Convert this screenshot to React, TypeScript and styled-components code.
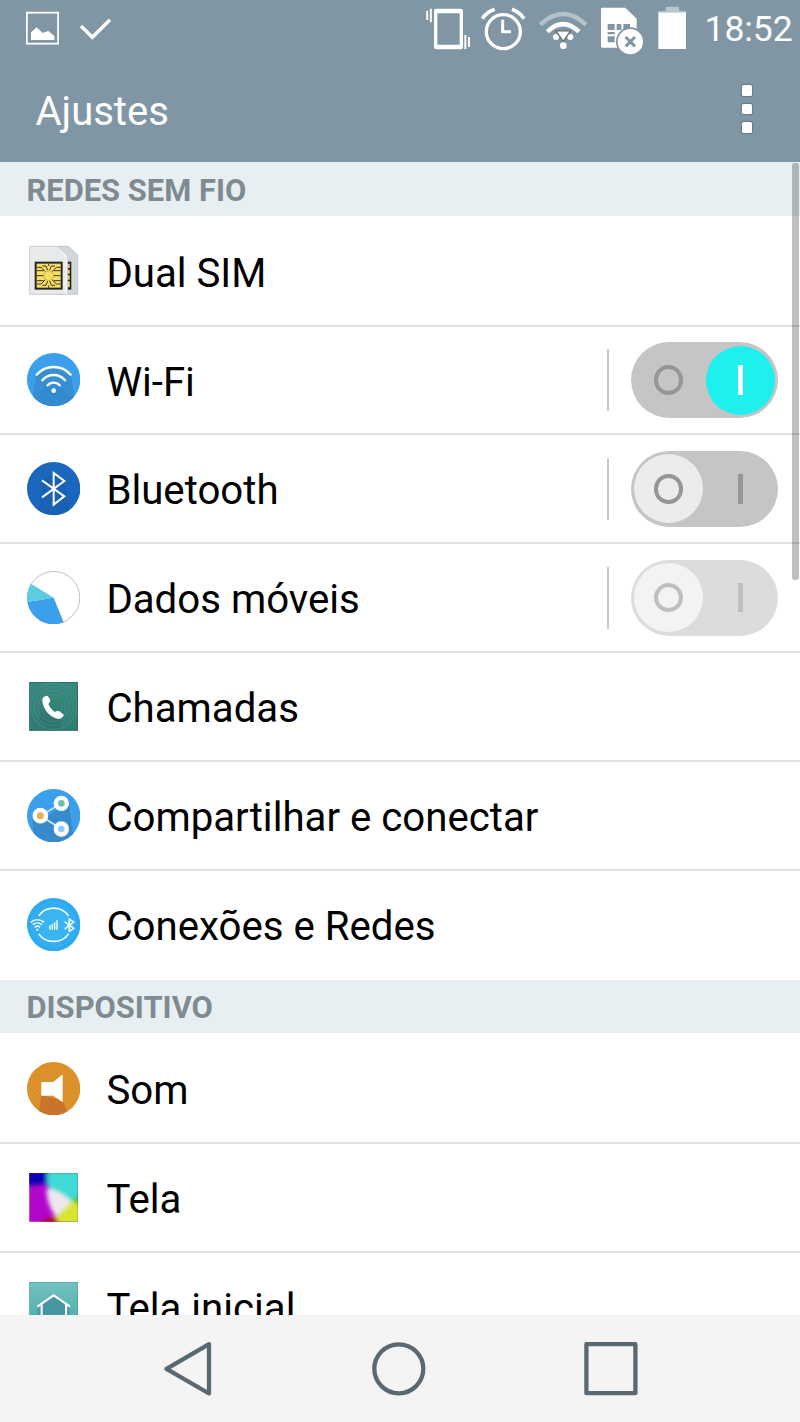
import React from "react";
import styled, { createGlobalStyle } from "styled-components";

const GlobalStyle = createGlobalStyle`
  *, *::before, *::after { box-sizing: border-box; }
  html, body { margin: 0; padding: 0; background: #fff; }
  body { font-family: Roboto, "Liberation Sans", sans-serif; overflow: hidden; }
  svg { display: block; flex: none; }
`;

const Screen = styled.div`
  width: 800px;
  height: 1422px;
  display: flex;
  flex-direction: column;
  overflow: hidden;
  background: #fff;
`;

const TopArea = styled.header`
  flex: none;
  height: 162.2px;
  background: #8096a4;
  color: #fff;
`;

const StatusBar = styled.div`
  display: flex;
  height: 60px;
  padding-left: 26px;
`;

const StatusGroup = styled.div<{ $gap: number; $end?: boolean }>`
  display: flex;
  gap: ${(p) => p.$gap}px;
  margin-left: ${(p) => (p.$end ? "auto" : "0")};
`;

const Clock = styled.time`
  width: 104px;
  padding-left: 8.5px;
  font-size: 35.6px;
  line-height: 59px;
  letter-spacing: -0.1px;
  white-space: nowrap;
`;

const TitleBar = styled.div`
  display: flex;
  align-items: center;
  justify-content: space-between;
  height: 102px;
  padding: 0 48px 4px 35.5px;
`;

const Title = styled.h1`
  margin: 0;
  padding-top: 5px;
  font-size: 40px;
  line-height: 48px;
  font-weight: 400;
`;

const MenuButton = styled.button`
  display: flex;
  flex-direction: column;
  gap: 8px;
  padding: 0;
  border: 0;
  background: none;
`;

const MenuDot = styled.span`
  width: 10.4px;
  height: 10.4px;
  border-radius: 1.5px;
  background: #fff;
  box-shadow: 0 0 1px 0.5px rgba(60, 75, 85, 0.35);
`;

const List = styled.main`
  position: relative;
  flex: 1;
  min-height: 0;
  overflow: hidden;
`;

const ScrollThumb = styled.div`
  position: absolute;
  top: 0.8px;
  right: 1px;
  width: 7px;
  height: 417px;
  border-radius: 3px;
  background: rgba(0, 0, 0, 0.25);
`;

const SectionHeader = styled.h2`
  display: flex;
  align-items: center;
  height: 53.5px;
  margin: 0;
  padding: 2.6px 0 0 26.5px;
  background: #e8eff3;
  color: #7f8b91;
  font-size: 30.9px;
  font-weight: 700;
`;

const Rows = styled.div`
  padding-top: 2px;
`;

const Row = styled.div`
  display: flex;
  align-items: center;
  height: 108.89px;
  padding: 0 22px 0 26.67px;
  border-bottom: 2px solid #dfe1e2;
  &:last-child { border-bottom-color: transparent; }
`;

const Label = styled.span`
  flex: 1;
  margin-left: 26.4px;
  padding-top: 5px;
  color: #000;
  font-size: 40.2px;
  line-height: 50px;
  white-space: nowrap;
`;

const Separator = styled.span`
  width: 2px;
  height: 62px;
  margin-right: 22.3px;
  background: #c9cacc;
`;

const Track = styled.span<{ $disabled?: boolean }>`
  display: flex;
  justify-content: space-between;
  width: 146.7px;
  height: 75.6px;
  padding: 3.3px 3.3px 3.3px 2.7px;
  border-radius: 38px;
  background: #c5c5c5;
  opacity: ${(p) => (p.$disabled ? 0.6 : 1)};
`;

const Knob = styled.span<{ $fill: string }>`
  display: flex;
  align-items: center;
  justify-content: center;
  width: 69px;
  height: 69px;
  border-radius: 50%;
  background: ${(p) => p.$fill};
`;

const Ring = styled.span`
  width: 29.3px;
  height: 29.3px;
  border: 4.4px solid #969696;
  border-radius: 50%;
`;

const Bar = styled.span<{ $color: string }>`
  width: 5px;
  height: 29.3px;
  background: ${(p) => p.$color};
`;

const NavBar = styled.nav`
  flex: none;
  display: flex;
  align-items: center;
  gap: 158px;
  height: 106.8px;
  padding-left: 160px;
  background: #f4f4f4;
`;

const NavIcon = styled.svg`
  width: 54px;
  height: 54px;
  fill: none;
  stroke: #5a6871;
  stroke-width: 4.3;
  stroke-linejoin: round;
`;

const RowIconSvg = styled.svg`
  width: 53.33px;
  height: 53.33px;
`;

type ToggleState = "on" | "off" | "disabled";

function Toggle({ state }: { state: ToggleState }) {
  const on = state === "on";
  return (
    <>
      <Separator />
      <Track $disabled={state === "disabled"}>
        <Knob $fill={on ? "transparent" : "#ececec"}><Ring /></Knob>
        <Knob $fill={on ? "#1ef0ee" : "transparent"}><Bar $color={on ? "#fff" : "#969696"} /></Knob>
      </Track>
    </>
  );
}

function Icon({ children }: { children: React.ReactNode }) {
  return <RowIconSvg viewBox="0 0 160 160" aria-hidden="true">{children}</RowIconSvg>;
}

const SimIcon = () => (
  <Icon>
    <path d="M90 7H125L152 33V151H90Z" fill="#d1d6da" stroke="#b4b8bc" strokeWidth="2" />
    <path d="M120 53H133V137H120Z" fill="#292725" />
    <path d="M121 59H128V72H121ZM121 77H128V89H121ZM121 94H128V107H121ZM121 112H128V130H121Z" fill="#f5dc5f" />
    <path d="M8 7H90L121 36V151H8Z" fill="#e8eaec" stroke="#b8bcc0" strokeWidth="2" />
    <path d="M90 7L121 36V151H115V40Z" fill="#f3f4f5" />
    <rect x="23" y="53" width="84" height="84" fill="#292725" />
    <rect x="29" y="59" width="72" height="72" fill="#f7df66" />
    <g fill="none" stroke="#3a3320" strokeWidth="3">
      <path d="M29 80H50M29 95H50M29 110H50M101 80H80M101 95H80M101 110H80" />
      <path d="M29 70H42L55 83M101 70H88L75 83M29 120H42L55 107M101 120H88L75 107" />
      <path d="M65 59V66M65 124V131M46 66H57L62 79M84 66H73L68 79M46 124H57L62 111M84 124H73L68 111" />
    </g>
    <circle cx="65" cy="95" r="14.5" fill="#f7df66" stroke="#9d8b3c" strokeWidth="1.5" />
  </Icon>
);

const WifiIcon = () => (
  <Icon>
    <clipPath id="wifiClip"><circle cx="80" cy="80" r="80" /></clipPath>
    <circle cx="80" cy="80" r="80" fill="#3b9fec" />
    <path d="M28 67Q80 22 132 67L148 160H12Z" fill="#378bcd" opacity=".8" clipPath="url(#wifiClip)" />
    <path d="M80 106L64 96L20 140L50 160H110L140 140L96 96Z" fill="#2f82c5" opacity=".3" clipPath="url(#wifiClip)" />
    <g fill="none" stroke="#fff" strokeWidth="7" strokeLinecap="round">
      <path d="M29 65A68 68 0 0 1 131 65" />
      <path d="M46 82A44 44 0 0 1 114 82" />
      <path d="M62 97A24 24 0 0 1 98 97" />
    </g>
    <circle cx="80" cy="113" r="7" fill="#fff" />
  </Icon>
);

const BluetoothIcon = () => (
  <Icon>
    <clipPath id="btClip"><circle cx="80" cy="80" r="80" /></clipPath>
    <circle cx="80" cy="80" r="80" fill="#1a67bd" />
    <path d="M46 55L80 32L112 57L130 160H32Z" fill="#195baa" opacity=".5" clipPath="url(#btClip)" />
    <path d="M45 55L112 103L80 128V33L112 57L45 106" fill="none" stroke="#fff" strokeWidth="6" />
  </Icon>
);

const DataIcon = () => (
  <Icon>
    <circle cx="80" cy="80" r="78.5" fill="#fff" stroke="#bfc0c8" strokeWidth="3" />
    <path d="M80 80L12 38A80 80 0 0 0 1 93Z" fill="#5ccde1" />
    <path d="M80 80L1 93A80 80 0 0 0 110 154Z" fill="#3b9fec" />
  </Icon>
);

const PhoneIcon = () => (
  <Icon>
    <linearGradient id="phoneBg" x1="0" y1="0" x2="0" y2="1">
      <stop offset="0" stopColor="#38897f" />
      <stop offset="1" stopColor="#2f7b71" />
    </linearGradient>
    <rect x="7" y="6" width="146" height="146" fill="url(#phoneBg)" />
    <g fill="none" stroke="#53a094" strokeWidth="2.5" opacity=".5">
      <circle cx="80" cy="79" r="25" /><circle cx="80" cy="79" r="36" />
      <circle cx="80" cy="79" r="47" /><circle cx="80" cy="79" r="58" /><circle cx="80" cy="79" r="69" />
    </g>
    <path d="M46 60L36 120Q60 152 98 145L110 107L90 98Z" fill="#225f5b" opacity=".25" />
    <path transform="translate(-80 -30)" d="M126 88Q129 77 142 77L150 91Q150 97 144 102Q149 116 163 126Q169 122 177 124L191 135Q186 146 177 147Q159 146 143 130Q126 112 126 88Z" fill="#fff" />
    <rect x="8" y="7" width="144" height="144" fill="none" stroke="#236d64" strokeWidth="2" />
  </Icon>
);

const ShareIcon = () => (
  <Icon>
    <clipPath id="shareClip"><circle cx="80" cy="80" r="80" /></clipPath>
    <circle cx="80" cy="80" r="80" fill="#3b9fec" />
    <path d="M17 84L63 80L125 37L142 160H20Z" fill="#378bcd" clipPath="url(#shareClip)" />
    <path d="M103 43L40 80L103 120" fill="none" stroke="#d9efff" strokeWidth="4.5" />
    <circle cx="40" cy="80" r="23.5" fill="#fff" /><circle cx="40" cy="80" r="10.5" fill="#f4aa4c" />
    <circle cx="103" cy="43" r="23" fill="#fff" /><circle cx="103" cy="43" r="10" fill="#6abfb0" />
    <circle cx="103" cy="120" r="23" fill="#fff" /><circle cx="103" cy="120" r="10" fill="#91c9fb" />
  </Icon>
);

const NetworkIcon = () => (
  <Icon>
    <circle cx="80" cy="80" r="80" fill="#2eabef" />
    <g fill="none" stroke="#51bdf6" strokeWidth="2" opacity=".7">
      <circle cx="80" cy="80" r="66" /><circle cx="80" cy="80" r="58" />
    </g>
    <circle cx="80" cy="80" r="47" fill="#3bb4f2" />
    <g fill="none" stroke="#e9f8ff" strokeWidth="5">
      <path d="M35 54A55 55 0 0 1 125 54M35 107A55 55 0 0 0 125 107" />
      <path d="M11 73A30 30 0 0 1 51 73M17 80A22 22 0 0 1 45 80M23 88A12 12 0 0 1 39 88" strokeWidth="4.8" />
      <path d="M69 82V95M76 78V95M83 73V95M90 67V95" strokeWidth="4.5" />
      <path d="M113 71L140 91L127 100V63L140 72L113 93" strokeWidth="5" />
    </g>
    <circle cx="31" cy="95" r="3.5" fill="#e9f8ff" />
  </Icon>
);

const SoundIcon = () => (
  <Icon>
    <clipPath id="soundClip"><circle cx="80" cy="80" r="80" /></clipPath>
    <pattern id="soundDots" width="14" height="14" patternUnits="userSpaceOnUse">
      <rect width="14" height="14" fill="#df932c" />
      <circle cx="3.5" cy="3.5" r="2" fill="#c98025" /><circle cx="10.5" cy="10.5" r="2" fill="#c98025" />
    </pattern>
    <circle cx="80" cy="80" r="80" fill="url(#soundDots)" />
    <path d="M43 100L34 160H124L107 115Z" fill="#c8702b" opacity=".9" clipPath="url(#soundClip)" />
    <path d="M43 60H79L107 37V121L79 101H43Z" fill="#fff" />
  </Icon>
);

const DisplayIcon = () => (
  <Icon>
    <clipPath id="displayClip"><rect x="7" y="6" width="146" height="146" /></clipPath>
    <filter id="displayBlur" x="-20%" y="-20%" width="140%" height="140%"><feGaussianBlur stdDeviation="6.5" /></filter>
    <g clipPath="url(#displayClip)">
      <rect width="160" height="160" fill="#b306cb" />
      <g filter="url(#displayBlur)">
        <path d="M-20-20H65V36Q40 44-20 42Z" fill="#1000b4" />
        <path d="M30 170Q60 136 85 136L110 170Z" fill="#b00c28" />
        <path d="M58-20H180V76L130 95L70 66Q54 40 64-20Z" fill="#40d9d6" />
        <path d="M180 60L128 90L180 140Z" fill="#35cf31" />
        <path d="M130 88Q158 104 180 112V180H105L82 130Z" fill="#d9e52f" />
        <path d="M58 54Q95 54 134 92Q112 112 86 136Q60 104 58 54Z" fill="#eee8ef" />
      </g>
      <rect x="8" y="7" width="144" height="144" fill="none" stroke="#444" strokeOpacity=".3" strokeWidth="2" />
    </g>
  </Icon>
);

const HomeIcon = () => (
  <Icon>
    <linearGradient id="homeBg" x1="0" y1="0" x2="0" y2="1">
      <stop offset="0" stopColor="#73c2bf" /><stop offset="1" stopColor="#48a8a8" />
    </linearGradient>
    <rect x="7" y="6" width="146" height="146" fill="url(#homeBg)" />
    <path d="M30 80L80 46L129 80V152H30Z" fill="#3c8b9c" opacity=".45" />
    <path d="M46 72L80 48L116 72V130H46Z" fill="#4597a2" />
    <path d="M31 80L80 46L129 80M44 72V125H117V72" fill="none" stroke="#fff" strokeWidth="6" />
    <rect x="8" y="7" width="144" height="144" fill="none" stroke="#3d9496" strokeOpacity=".6" strokeWidth="2" />
  </Icon>
);

const PictureStatus = () => (
  <svg width="33" height="60" viewBox="78 0 99 180">
    <rect x="80.5" y="38" width="94" height="93" fill="none" stroke="#fff" strokeWidth="5.5" />
    <path d="M93 120V97L110 82L128 99L145 93L163 108V120Z" fill="#fff" />
  </svg>
);

const CheckStatus = () => (
  <svg width="33" height="60" viewBox="240 0 99 180">
    <path d="M243 78L277 112L330 59" fill="none" stroke="#fff" strokeWidth="10.5" />
  </svg>
);

const VibrateStatus = () => (
  <svg width="45" height="60" viewBox="48 0 135 180">
    <path d="M78 26H152Q159 26 159 33V141Q159 148 152 148H78Q72 148 72 141V33Q72 26 78 26ZM82 40V134H149V40Z" fill="#fff" fillRule="evenodd" />
    <path d="M51.5 32V60M62.5 26V67M166 105V147M177 111V141" fill="none" stroke="#fff" strokeWidth="6" />
  </svg>
);

const AlarmStatus = () => (
  <svg width="47" height="60" viewBox="213 0 141 180">
    <g fill="none" stroke="#fff">
      <circle cx="280" cy="95" r="51" strokeWidth="10" />
      <path d="M278 59V95H303" strokeWidth="9" />
      <path d="M217 56Q230 36 254 28M306 28Q329 36 342 56" strokeWidth="11" />
    </g>
  </svg>
);

const WifiStatus = () => (
  <svg width="52" height="60" viewBox="384 0 156 180">
    <g fill="none" stroke="#fff" strokeWidth="13.5">
      <path d="M391 74Q459 10 528 74" opacity=".42" />
      <path d="M412 95Q459 50 507 95" />
    </g>
    <circle cx="438" cy="111" r="9" fill="#fff" /><circle cx="481" cy="111" r="9" fill="#fff" />
    <circle cx="460" cy="137" r="10" fill="#fff" />
    <path d="M438 93H481L460 124Z" fill="#fff" stroke="#62645f" strokeWidth="3.5" />
  </svg>
);

const SimErrorStatus = () => (
  <svg width="48" height="60" viewBox="30 0 144 180">
    <path d="M37 23H106L140 56V143H37Q33 143 33 138V28Q33 23 37 23Z" fill="#fff" />
    <path d="M53 72H74V90H53ZM80 72H94V90H80ZM100 72H120V90H100ZM53 96V103H74V96ZM53 109H74V127H53Z" fill="#8096a4" />
    <circle cx="121" cy="125" r="43" fill="#8096a4" />
    <circle cx="121" cy="125" r="38" fill="#fff" />
    <path d="M107 111L135 139M135 111L107 139" stroke="#8096a4" strokeWidth="9" />
  </svg>
);

const BatteryStatus = () => (
  <svg width="28" height="60" viewBox="204 0 84 180">
    <path d="M227 20H267V33H288V40H205V33H227Z" fill="#b6c5ce" />
    <rect x="205" y="38" width="83" height="109" fill="#fff" />
  </svg>
);

interface Item {
  label: string;
  icon: () => React.ReactElement;
  toggle?: ToggleState;
}

const sections: { title: string; items: Item[] }[] = [
  {
    title: "REDES SEM FIO",
    items: [
      { label: "Dual SIM", icon: SimIcon },
      { label: "Wi-Fi", icon: WifiIcon, toggle: "on" },
      { label: "Bluetooth", icon: BluetoothIcon, toggle: "off" },
      { label: "Dados móveis", icon: DataIcon, toggle: "disabled" },
      { label: "Chamadas", icon: PhoneIcon },
      { label: "Compartilhar e conectar", icon: ShareIcon },
      { label: "Conexões e Redes", icon: NetworkIcon },
    ],
  },
  {
    title: "DISPOSITIVO",
    items: [
      { label: "Som", icon: SoundIcon },
      { label: "Tela", icon: DisplayIcon },
      { label: "Tela inicial", icon: HomeIcon },
    ],
  },
];

export default function App() {
  return (
    <Screen>
      <GlobalStyle />
      <TopArea>
        <StatusBar>
          <StatusGroup $gap={21}>
            <PictureStatus />
            <CheckStatus />
          </StatusGroup>
          <StatusGroup $gap={10} $end>
            <VibrateStatus />
            <AlarmStatus />
            <WifiStatus />
            <SimErrorStatus />
            <BatteryStatus />
            <Clock>18:52</Clock>
          </StatusGroup>
        </StatusBar>
        <TitleBar>
          <Title>Ajustes</Title>
          <MenuButton aria-label="Menu"><MenuDot /><MenuDot /><MenuDot /></MenuButton>
        </TitleBar>
      </TopArea>
      <List>
        {sections.map((section) => (
          <section key={section.title}>
            <SectionHeader>{section.title}</SectionHeader>
            <Rows>
              {section.items.map(({ label, icon: ItemIcon, toggle }) => (
                <Row key={label}>
                  <ItemIcon />
                  <Label>{label}</Label>
                  {toggle && <Toggle state={toggle} />}
                </Row>
              ))}
            </Rows>
          </section>
        ))}
        <ScrollThumb />
      </List>
      <NavBar>
        <NavIcon viewBox="0 0 54 54"><path d="M49 2.2V51.5L6.5 26.8Z" /></NavIcon>
        <NavIcon viewBox="0 0 54 54"><circle cx="26.8" cy="26.8" r="24.5" /></NavIcon>
        <NavIcon viewBox="0 0 54 54"><rect x="2.4" y="2.2" width="49" height="49" /></NavIcon>
      </NavBar>
    </Screen>
  );
}
